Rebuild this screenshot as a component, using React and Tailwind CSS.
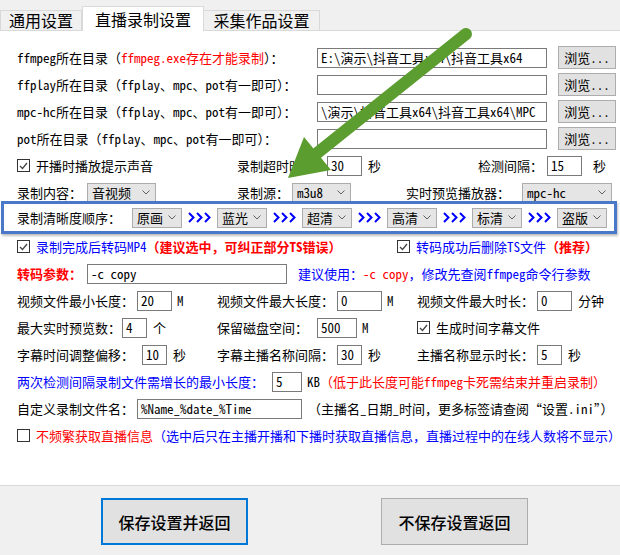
import React from "react";

const BASE = "font-['Noto_Sans_Mono_CJK_SC','Noto_Sans_CJK_SC',sans-serif]";

function Cell({ className = "", children }) {
  return <span className={`shrink-0 whitespace-nowrap ${className}`}>{children}</span>;
}

function Input({ className = "", value = "" }) {
  return (
    <div
      className={`h-[20px] shrink-0 overflow-hidden whitespace-nowrap border border-[#7a7a7a] bg-white px-[3px] leading-[18px] ${className}`}
    >
      {value}
    </div>
  );
}

function Select({ className = "", value }) {
  return (
    <div
      className={`flex h-[20px] shrink-0 items-center justify-between border border-[#acacac] bg-[#e5e5e5] pl-[4px] pr-[5px] leading-[18px] ${className}`}
    >
      <span>{value}</span>
      <svg width="8" height="5" viewBox="0 0 8 5">
        <path d="M0.5 0.5 L4 4 L7.5 0.5" stroke="#606060" fill="none" />
      </svg>
    </div>
  );
}

function Browse() {
  return (
    <button
      type="button"
      className="ml-[11px] h-[23px] w-[58px] shrink-0 border border-[#adadad] bg-[#e1e1e1] text-[13px] leading-[21px]"
    >
      浏览...
    </button>
  );
}

function Check({ checked }) {
  return (
    <span className="mr-[6px] flex h-[13px] w-[13px] shrink-0 items-center justify-center border border-[#333] bg-white">
      {checked && (
        <svg width="9" height="8" viewBox="0 0 9 8">
          <path d="M1 4 L3.5 6.5 L8 1" stroke="#444" strokeWidth="1.3" fill="none" />
        </svg>
      )}
    </span>
  );
}

function Row({ children, className = "" }) {
  return <div className={`flex h-[27px] items-center pl-[17px] ${className}`}>{children}</div>;
}

// the blue ">>>" between quality selects
function Arrows() {
  return (
    <Cell className="flex w-[35px] justify-center gap-[1px]">
      {[0, 1, 2].map((i) => (
        <svg key={i} width="7" height="11" viewBox="0 0 7 11">
          <path d="M1 1 L5.5 5.5 L1 10" stroke="#0000ff" strokeWidth="2" fill="none" />
        </svg>
      ))}
    </Cell>
  );
}

const ORDER = ["原画", "蓝光", "超清", "高清", "标清", "盗版"];

export default function App() {
  return (
    <div className={`relative h-[555px] w-[620px] overflow-hidden bg-[#f0f0f0] text-[13px] text-black ${BASE}`}>
      {/* tabs */}
      <div className="flex h-[31px] items-end border-b border-[#d9d9d9] font-['Noto_Sans_CJK_SC',sans-serif] text-[16px]">
        <div className="h-[20px] w-[82px] border border-b-0 border-[#d9d9d9] text-center leading-[19px]">通用设置</div>
        <div className="relative z-10 -mb-px h-[25px] w-[122px] border border-b-0 border-[#d9d9d9] bg-white text-center leading-[24px]">
          直播录制设置
        </div>
        <div className="h-[20px] w-[116px] border border-b-0 border-l-0 border-[#d9d9d9] text-center leading-[19px]">采集作品设置</div>
      </div>

      {/* content */}
      <div className="h-[454px] bg-white pt-[13px]">
        <Row>
          <Cell className="w-[300px]">
            ffmpeg所在目录（<span className="text-[#ff0000]">ffmpeg.exe存在才能录制</span>）：
          </Cell>
          <Input className="w-[230px]" value="E:\演示\抖音工具x64\抖音工具x64" />
          <Browse />
        </Row>
        <Row>
          <Cell className="w-[300px]">ffplay所在目录（ffplay、mpc、pot有一即可）：</Cell>
          <Input className="w-[230px]" />
          <Browse />
        </Row>
        <Row>
          <Cell className="w-[300px]">mpc-hc所在目录（ffplay、mpc、pot有一即可）：</Cell>
          <Input className="w-[230px]" value="\演示\抖音工具x64\抖音工具x64\MPC" />
          <Browse />
        </Row>
        <Row>
          <Cell className="w-[300px]">pot所在目录（ffplay、mpc、pot有一即可）：</Cell>
          <Input className="w-[230px]" />
          <Browse />
        </Row>
        <Row>
          <Cell className="flex w-[220px] items-center">
            <Check checked />
            开播时播放提示声音
          </Cell>
          <Cell className="w-[90px]">录制超时时间：</Cell>
          <Input className="w-[35px]" value="30" />
          <Cell className="ml-[6px] w-[110px]">秒</Cell>
          <Cell className="w-[69px]">检测间隔：</Cell>
          <Input className="w-[35px]" value="15" />
          <Cell className="ml-[11px]">秒</Cell>
        </Row>
        <Row>
          <Cell className="w-[70px]">录制内容：</Cell>
          <Select className="w-[69px]" value="音视频" />
          <Cell className="ml-[81px] w-[55px]">录制源：</Cell>
          <Select className="w-[59px]" value="m3u8" />
          <Cell className="ml-[55px] w-[116px]">实时预览播放器：</Cell>
          <Select className="w-[90px]" value="mpc-hc" />
        </Row>

        <div className="relative -mt-[5px] -mb-[1px] ml-[1px] flex h-[33px] w-[616px] items-center border-[3px] border-[#4a78c8] pl-[13px] shadow-[1px_2px_2px_rgba(0,0,0,0.25)]">
          <Cell className="w-[115px]">录制清晰度顺序：</Cell>
          {ORDER.map((q, i) => (
            <React.Fragment key={q}>
              <Select className="w-[50px]" value={q} />
              {i < ORDER.length - 1 && <Arrows />}
            </React.Fragment>
          ))}
        </div>

        <Row>
          <Cell className="flex w-[380px] items-center">
            <Check checked />
            <span className="text-[#0000ff]">录制完成后转码MP4</span>
            <span className="font-bold text-[#ff0000]">（建议选中，可纠正部分TS错误）</span>
          </Cell>
          <Cell className="flex items-center">
            <Check checked />
            <span className="text-[#0000ff]">转码成功后删除TS文件</span>
            <span className="font-bold text-[#ff0000]">（推荐）</span>
          </Cell>
        </Row>
        <Row>
          <Cell className="w-[70px] font-bold text-[#ff0000]">转码参数：</Cell>
          <Input className="w-[200px]" value="-c copy" />
          <Cell className="ml-[11px] text-[#0000ff]">
            建议使用：<span className="text-[#ff0000]">-c copy</span>，修改先查阅ffmpeg命令行参数
          </Cell>
        </Row>
        <Row>
          <Cell className="w-[120px]">视频文件最小长度：</Cell>
          <Input className="w-[35px]" value="20" />
          <Cell className="ml-[5px] w-[40px]">M</Cell>
          <Cell className="w-[120px]">视频文件最大长度：</Cell>
          <Input className="w-[45px]" value="0" />
          <Cell className="ml-[5px] w-[30px]">M</Cell>
          <Cell className="w-[120px]">视频文件最大时长：</Cell>
          <Input className="w-[35px]" value="0" />
          <Cell className="ml-[6px]">分钟</Cell>
        </Row>
        <Row>
          <Cell className="w-[105px]">最大实时预览数：</Cell>
          <Input className="w-[25px]" value="4" />
          <Cell className="ml-[6px] w-[64px]">个</Cell>
          <Cell className="w-[100px]">保留磁盘空间：</Cell>
          <Input className="w-[40px]" value="500" />
          <Cell className="ml-[5px] w-[55px]">M</Cell>
          <Cell className="flex items-center">
            <Check checked />
            生成时间字幕文件
          </Cell>
        </Row>
        <Row>
          <Cell className="w-[125px]">字幕时间调整偏移：</Cell>
          <Input className="w-[25px]" value="10" />
          <Cell className="ml-[6px] w-[44px]">秒</Cell>
          <Cell className="w-[120px]">字幕主播名称间隔：</Cell>
          <Input className="w-[25px]" value="30" />
          <Cell className="ml-[6px] w-[49px]">秒</Cell>
          <Cell className="w-[120px]">主播名称显示时长：</Cell>
          <Input className="w-[25px]" value="5" />
          <Cell className="ml-[6px]">秒</Cell>
        </Row>
        <Row>
          <Cell className="w-[255px] text-[#0000ff]">两次检测间隔录制文件需增长的最小长度：</Cell>
          <Input className="w-[30px]" value="5" />
          <Cell className="ml-[5px]">
            KB<span className="text-[#ff0000]">（低于此长度可能ffmpeg卡死需结束并重启录制）</span>
          </Cell>
        </Row>
        <Row>
          <Cell className="w-[120px]">自定义录制文件名：</Cell>
          <Input className="w-[165px]" value="%Name_%date_%Time" />
          <Cell className="ml-[6px]">（主播名_日期_时间，更多标签请查阅“设置.ini”）</Cell>
        </Row>
        <Row>
          <Cell className="flex items-center">
            <Check />
            <span className="text-[#ff0000]">不频繁获取直播信息</span>
            <span className="text-[#0000ff]">（选中后只在主播开播和下播时获取直播信息，直播过程中的在线人数将不显示）</span>
          </Cell>
        </Row>
      </div>

      {/* bottom buttons */}
      <div className="flex h-[70px] items-start gap-[133px] border-t border-[#d9d9d9] pl-[101px] pt-[12px] font-['Noto_Sans_CJK_SC',sans-serif] text-[16px] font-medium">
        <button type="button" className="h-[47px] w-[147px] border-2 border-[#0078d7] bg-[#e1e1e1]">
          保存设置并返回
        </button>
        <button type="button" className="h-[47px] w-[147px] border border-[#adadad] bg-[#e1e1e1]">
          不保存设置返回
        </button>
      </div>

      {/* green annotation arrow */}
      <svg className="pointer-events-none absolute left-0 top-0" width="620" height="555" viewBox="0 0 620 555">
        <line x1="466" y1="34" x2="316" y2="154" stroke="#5c9d2f" strokeWidth="12" strokeLinecap="round" />
        <polygon points="288,178 304,137 331,170" fill="#5c9d2f" />
      </svg>
    </div>
  );
}
